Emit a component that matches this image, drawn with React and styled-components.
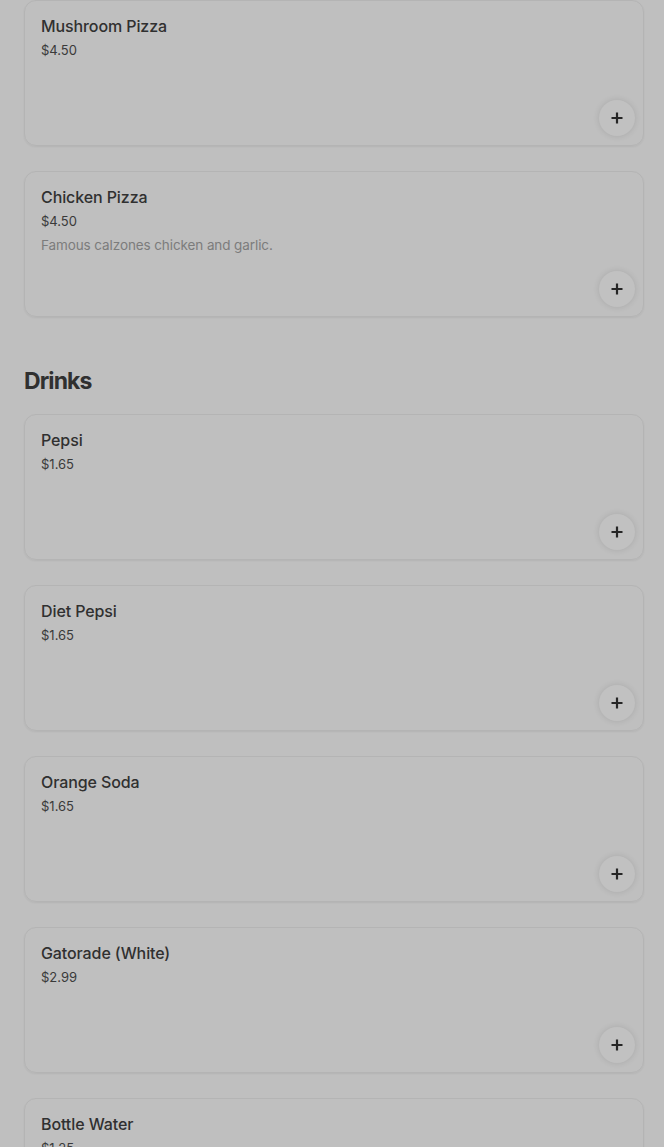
import React from "react";
import styled, { createGlobalStyle } from "styled-components";

const Global = createGlobalStyle`
  html, body { margin: 0; padding: 0; background: #bfbfbf; }
  body { font-family: Inter, "Noto Sans", Roboto, sans-serif; -webkit-font-smoothing: antialiased; }
  * { box-sizing: border-box; }
`;

const Page = styled.div`
  padding: 0 20px 0 24px;
  display: flex;
  flex-direction: column;
`;

const Section = styled.section`
  display: flex;
  flex-direction: column;
  margin-top: ${(p) => (p.$first ? "0" : "48px")};
`;

const Heading = styled.h2`
  margin: 0 0 17px;
  font-size: 23px;
  line-height: 32px;
  font-weight: 700;
  letter-spacing: -0.9px;
  color: #303030;
`;

const List = styled.div`
  display: flex;
  flex-direction: column;
  gap: 25px;
`;

const Card = styled.div`
  min-height: 146px;
  border: 1px solid #b4b4b4;
  border-radius: 12px;
  box-shadow: 0 1px 2px rgba(0, 0, 0, 0.06);
  padding: 13px 8px 9px 16px;
  display: flex;
  flex-direction: column;
`;

const Title = styled.div`
  font-size: 16px;
  line-height: 24px;
  font-weight: 500;
  letter-spacing: -0.1px;
  color: #303030;
`;

const Price = styled.div`
  font-size: 13px;
  line-height: 25px;
  color: #3a3a3a;
`;

const Desc = styled.div`
  font-size: 13.5px;
  line-height: 23px;
  letter-spacing: -0.1px;
  color: #7c7c7c;
`;

const AddButton = styled.button`
  margin-top: auto;
  align-self: flex-end;
  width: 36px;
  height: 36px;
  border-radius: 50%;
  border: none;
  padding: 0;
  background: #c1c1c1;
  box-shadow: 0 0 6px rgba(0, 0, 0, 0.12);
  display: flex;
  align-items: center;
  justify-content: center;
  cursor: pointer;
`;

const PlusIcon = () => (
  <svg width="12" height="12" viewBox="0 0 12 12">
    <path d="M6 0.5v11M0.5 6h11" stroke="#262626" strokeWidth="2.2" />
  </svg>
);

const sections = [
  {
    name: null,
    items: [
      { name: "Mushroom Pizza", price: "$4.50" },
      { name: "Chicken Pizza", price: "$4.50", desc: "Famous calzones chicken and garlic." },
    ],
  },
  {
    name: "Drinks",
    items: [
      { name: "Pepsi", price: "$1.65" },
      { name: "Diet Pepsi", price: "$1.65" },
      { name: "Orange Soda", price: "$1.65" },
      { name: "Gatorade (White)", price: "$2.99" },
      { name: "Bottle Water", price: "$1.25" },
    ],
  },
];

export default function App() {
  return (
    <>
      <Global />
      <Page>
        {sections.map((s, i) => (
          <Section key={i} $first={i === 0}>
            {s.name && <Heading>{s.name}</Heading>}
            <List>
              {s.items.map((it) => (
                <Card key={it.name}>
                  <Title>{it.name}</Title>
                  <Price>{it.price}</Price>
                  {it.desc && <Desc>{it.desc}</Desc>}
                  <AddButton aria-label="Add">
                    <PlusIcon />
                  </AddButton>
                </Card>
              ))}
            </List>
          </Section>
        ))}
      </Page>
    </>
  );
}
